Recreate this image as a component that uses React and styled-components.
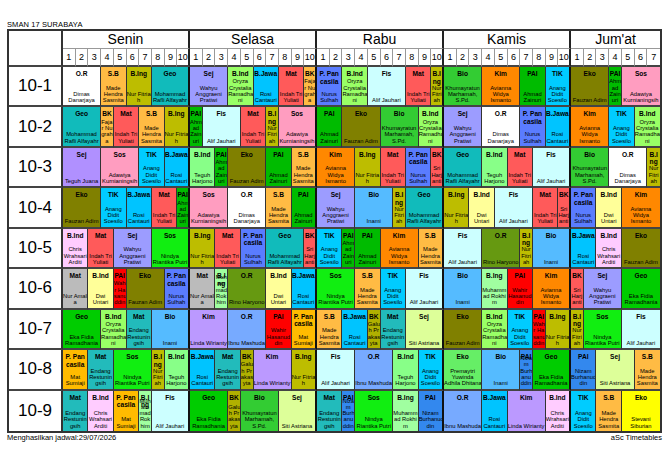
import React from "react";
import styled, { createGlobalStyle } from "styled-components";

const GlobalStyle = createGlobalStyle`
  html, body { margin: 0; padding: 0; background: #fff; }
  body { font-family: "Liberation Sans", Arial, sans-serif; color: #000; }
`;

// teacher: colour + the line breaks the generator used for each cell width
const T = {
  DD: { c: "#ffffff", 3: "Dimas\nDanarjaya" },
  MH: { c: "#ffbb44", 2: "Made\nHendra\nSasmita" },
  NF: { c: "#bdbd00", 1: "Nur\nFitri\nah", 2: "Nur Fitria\nh" },
  MR: { c: "#11bbbb", 3: "Mohammad\nRafli Alfayahr" },
  WA: { c: "#9c9cff", 3: "Wahyu\nAnggraeni\nPratiwi" },
  OC: { c: "#99ff66", 2: "Oryza\nCrystalia\nRamadha\nni" },
  RC: { c: "#00c4ff", 2: "Rosi\nCantauri" },
  IT: { c: "#ff5a5a", 2: "Indah Tri\nYuliati" },
  FN: { c: "#ffbb44", 1: "Faja\nr Nu\ngrah\na" },
  NS: { c: "#5a7cff", 2: "Nurus\nSulhah" },
  AJ: { c: "#ccffff", 3: "Alif Jauhari" },
  KM: { c: "#33cc33", 3: "Khumayratun\nMarhamah,\nS.Pd." },
  AW: { c: "#ff8800", 3: "Avianna\nWidya\nIsmanto" },
  AZ: { c: "#00bb00", 1: "Ahm\nad\nZain\nuri", 2: "Ahmad\nZainuri" },
  AD: { c: "#00ccff", 2: "Anang\nDidit\nSoesilo" },
  FA: { c: "#808000", 3: "Fauzan Adim" },
  AK: { c: "#ff9dc0", 3: "Adawiya\nKurnianingsih" },
  TJ: { c: "#b090ff", 3: "Teguh Juana" },
  TH: { c: "#88ff88", 2: "Teguh\nHarjono" },
  SH: { c: "#ff5a5a", 1: "Sri\nHarj\nanti" },
  IN: { c: "#55bbff", 3: "Inami" },
  DU: { c: "#ffff99", 2: "Dwi\nUntari" },
  CW: { c: "#ffccff", 2: "Chris\nWrahsari\nArditi" },
  NR: { c: "#11ee11", 3: "Nindya\nRiantika Putri" },
  NA: { c: "#bbbbbb", 2: "Nur Amali\na" },
  WH: { c: "#ff0000", 1: "Wahi\nr Ha\nsanu\nddin", 2: "Wahir\nHasanud\ndin" },
  RK: { c: "#a0ffa0", 1: "Muh\nam\nmad\nRok\nhim", 2: "Muhamm\nad Rokhi\nm" },
  RH: { c: "#669911", 3: "Rino Haryono" },
  EF: { c: "#00cc00", 3: "Eka Fidia\nRamadhania" },
  ER: { c: "#22bbbb", 2: "Endang\nRestunin\ngsih" },
  LW: { c: "#bb99ff", 3: "Linda Wirianty" },
  IM: { c: "#77aaff", 3: "Ibnu Mashuda" },
  MS: { c: "#ffbb00", 2: "Mat\nSumiaji" },
  GP: { c: "#b0b000", 1: "Galu\nh Pr\nakasi\nyta" },
  SA: { c: "#ddff99", 3: "Siti Astriana" },
  PY: { c: "#66ee66", 3: "Premaytri\nYuwinda\nAdhila Dhitana" },
  NB: { c: "#3388ee", 1: "Niza\nm\nBurh\nanu\nddin", 2: "Nizam\nBurhanud\ndin" },
  SS: { c: "#ffff00", 3: "Stevani\nSiburian" },
};

const days = [
  { name: "Senin", n: 10 },
  { name: "Selasa", n: 10 },
  { name: "Rabu", n: 10 },
  { name: "Kamis", n: 10 },
  { name: "Jum'at", n: 7 },
];

const PP = "P. Pancasila";

const schedule = [
  ["10-1", [
    ["O.R", "DD", 3], ["S.B", "MH", 2], ["B.Ing", "NF", 2], ["Geo", "MR", 3],
    ["Sej", "WA", 3], ["B.Ind", "OC", 2], ["B.Jawa", "RC", 2], ["Mat", "IT", 2], ["BK", "FN", 1],
    [PP, "NS", 2], ["B.Ind", "OC", 2], ["Fis", "AJ", 3], ["Mat", "IT", 2], ["B.Ing", "NF", 1],
    ["Bio", "KM", 3], ["Kim", "AW", 3], ["PAI", "AZ", 2], ["TIK", "AD", 2],
    ["Eko", "FA", 3], ["PAI", "AZ", 1], ["Sos", "AK", 3],
  ]],
  ["10-2", [
    ["Geo", "MR", 3], ["BK", "FN", 1], ["Mat", "IT", 2], ["S.B", "MH", 2], ["B.Ing", "NF", 2],
    ["PAI", "AZ", 1], ["Fis", "AJ", 3], ["Mat", "IT", 2], ["B.Ing", "NF", 1], ["Sos", "AK", 3],
    ["PAI", "AZ", 2], ["Eko", "FA", 3], ["Bio", "KM", 3], ["B.Ind", "OC", 2],
    ["Sej", "WA", 3], ["O.R", "DD", 3], [PP, "NS", 2], ["B.Jawa", "RC", 2],
    ["Kim", "AW", 3], ["TIK", "AD", 2], ["B.Ind", "OC", 2],
  ]],
  ["10-3", [
    ["Sej", "TJ", 3], ["Sos", "AK", 3], ["TIK", "AD", 2], ["B.Jawa", "RC", 2],
    ["B.Ind", "TH", 2], ["PAI", "AZ", 1], ["Eko", "FA", 3], ["PAI", "AZ", 2], ["S.B", "MH", 2],
    ["Kim", "AW", 3], ["B.Ing", "NF", 2], ["Mat", "IT", 2], [PP, "NS", 2], ["BK", "SH", 1],
    ["Geo", "MR", 3], ["B.Ind", "TH", 2], ["Mat", "IT", 2], ["Fis", "AJ", 3],
    ["Bio", "KM", 3], ["O.R", "DD", 3], ["B.Ing", "NF", 1],
  ]],
  ["10-4", [
    ["Eko", "FA", 3], ["TIK", "AD", 2], ["B.Jawa", "RC", 2], ["Mat", "IT", 2], ["PAI", "AZ", 1],
    ["Sos", "AK", 3], ["O.R", "DD", 3], ["S.B", "MH", 2], ["PAI", "AZ", 2],
    ["Sej", "WA", 3], ["Bio", "IN", 3], ["B.Ing", "NF", 1], ["Geo", "MR", 3],
    ["B.Ing", "NF", 2], ["B.Ind", "DU", 2], ["Fis", "AJ", 3], ["Mat", "IT", 2], ["BK", "SH", 1],
    [PP, "NS", 2], ["B.Ind", "DU", 2], ["Kim", "AW", 3],
  ]],
  ["10-5", [
    ["B.Ind", "CW", 2], ["Mat", "IT", 2], ["Sej", "WA", 3], ["Sos", "NR", 3],
    ["B.Ing", "NF", 2], ["Mat", "IT", 2], [PP, "NS", 2], ["Geo", "MR", 3], ["BK", "SH", 1],
    ["TIK", "AD", 2], ["PAI", "AZ", 1], ["PAI", "AZ", 2], ["Kim", "AW", 3], ["S.B", "MH", 2],
    ["Fis", "AJ", 3], ["O.R", "RH", 3], ["B.Ing", "NF", 1], ["Bio", "IN", 3],
    ["B.Jawa", "RC", 2], ["B.Ind", "CW", 2], ["Eko", "FA", 3],
  ]],
  ["10-6", [
    ["Mat", "NA", 2], ["B.Ind", "DU", 2], ["PAI", "WH", 1], ["Eko", "FA", 3], [PP, "NS", 2],
    ["Mat", "NA", 2], ["B.Ing", "RK", 1], ["O.R", "RH", 3], ["B.Ind", "DU", 2], ["B.Jawa", "RC", 2],
    ["Sos", "NR", 3], ["S.B", "MH", 2], ["TIK", "AD", 2], ["Fis", "AJ", 3],
    ["Bio", "IN", 3], ["B.Ing", "RK", 2], ["PAI", "WH", 2], ["Kim", "AW", 3],
    ["BK", "SH", 1], ["Sej", "WA", 3], ["Geo", "EF", 3],
  ]],
  ["10-7", [
    ["Geo", "EF", 3], ["B.Ind", "OC", 2], ["Mat", "ER", 2], ["Bio", "IN", 3],
    ["Kim", "LW", 3], ["O.R", "IM", 3], ["PAI", "WH", 2], [PP, "MS", 2],
    ["S.B", "MH", 2], ["B.Jawa", "RC", 2], ["BK", "GP", 1], ["Mat", "ER", 2], ["Sej", "SA", 3],
    ["Eko", "FA", 3], ["B.Ind", "OC", 2], ["TIK", "AD", 2], ["PAI", "WH", 1], ["B.Ing", "NF", 2],
    ["B.Ing", "NF", 1], ["Sos", "NR", 3], ["Fis", "AJ", 3],
  ]],
  ["10-8", [
    [PP, "MS", 2], ["Mat", "ER", 2], ["Sos", "NR", 3], ["B.Ing", "NF", 1], ["B.Ind", "TH", 2],
    ["B.Jawa", "RC", 2], ["Mat", "ER", 2], ["BK", "GP", 1], ["Kim", "LW", 3], ["B.Ing", "NF", 2],
    ["Fis", "AJ", 3], ["O.R", "IM", 3], ["B.Ind", "TH", 2], ["TIK", "AD", 2],
    ["Eko", "PY", 3], ["Bio", "IN", 3], ["PAI", "NB", 1], ["Geo", "EF", 3],
    ["PAI", "NB", 2], ["Sej", "SA", 3], ["S.B", "MH", 2],
  ]],
  ["10-9", [
    ["Mat", "ER", 2], ["B.Ind", "CW", 2], [PP, "MS", 2], ["B.Ing", "RK", 1], ["Fis", "AJ", 3],
    ["Geo", "EF", 3], ["BK", "GP", 1], ["Bio", "KM", 3], ["Sej", "SA", 3],
    ["Mat", "ER", 2], ["PAI", "NB", 1], ["Sos", "NR", 3], ["B.Ing", "RK", 2], ["PAI", "NB", 2],
    ["O.R", "IM", 3], ["B.Jawa", "RC", 2], ["Kim", "LW", 3], ["B.Ind", "CW", 2],
    ["TIK", "AD", 2], ["S.B", "MH", 2], ["Eko", "SS", 3],
  ]],
];

const dayEnds = [10, 20, 30, 40];

// subject label as the generator wraps it
const subjectText = (subj, span) => {
  if (subj === PP) return "P. Pan\ncasila";
  if (subj === "B.Ing" && span === 1) return "B.I\nng";
  return subj;
};

const Page = styled.div`
  width: 655px;
  padding: 20px 0 0 7px;
`;

const Title = styled.div`
  height: 9px;
  font-size: 7.5px;
  line-height: 9px;
  letter-spacing: 0.1px;
`;

const Table = styled.div`
  box-sizing: border-box;
  width: 655px;
  height: 404px;
  border: 2px solid #333;
  display: grid;
  grid-template-columns: 54px repeat(47, minmax(0, 1fr));
  grid-template-rows: 18px 18px repeat(9, minmax(0, 1fr));
  background: #fff;
`;

const Corner = styled.div`
  grid-row: span 2;
  border-right: 2px solid #333;
  border-bottom: 2px solid #444;
`;

const DayHead = styled.div`
  grid-column: span ${(p) => p.$span};
  border-right: ${(p) => (p.$last ? "none" : "2px solid #222")};
  border-bottom: 1px solid #999;
  font-size: 14px;
  line-height: 17px;
  text-align: center;
`;

const PeriodNum = styled.div`
  border-right: ${(p) => (p.$dayEnd ? "2px solid #222" : p.$last ? "none" : "1px solid #999")};
  border-bottom: 2px solid #444;
  font-size: 9px;
  line-height: 16px;
  text-align: center;
`;

const ClassLabel = styled.div`
  border-right: 2px solid #333;
  border-bottom: ${(p) => (p.$last ? "none" : "2px solid #444")};
  display: flex;
  align-items: center;
  justify-content: center;
  font-size: 17px;
`;

const Lesson = styled.div`
  grid-column: span ${(p) => p.$span};
  display: grid;
  grid-template-rows: minmax(0, 1fr);
  grid-template-columns: minmax(0, 1fr);
  background: ${(p) => p.$bg};
  border-right: ${(p) => (p.$dayEnd ? "2px solid #111" : p.$last ? "none" : "1px solid #333")};
  border-bottom: ${(p) => (p.$lastRow ? "none" : "2px solid #444")};
  overflow: hidden;
`;

const Subject = styled.div`
  grid-area: 1 / 1;
  align-self: start;
  padding-top: 3px;
  font-size: 6.6px;
  font-weight: bold;
  line-height: 7.5px;
  text-align: center;
  white-space: pre;
`;

const Teacher = styled.div`
  grid-area: 1 / 1;
  align-self: end;
  padding-bottom: 2px;
  font-size: 5.8px;
  line-height: 6.3px;
  text-align: center;
  white-space: pre;
`;

const Footer = styled.div`
  display: flex;
  justify-content: space-between;
  font-size: 7.5px;
  line-height: 9px;
`;

function ClassRow({ label, lessons, lastRow }) {
  let pos = 0;
  return (
    <>
      <ClassLabel $last={lastRow}>{label}</ClassLabel>
      {lessons.map(([subj, tk, span], i) => {
        pos += span;
        const t = T[tk];
        return (
          <Lesson
            key={i}
            $span={span}
            $bg={t.c}
            $dayEnd={dayEnds.includes(pos)}
            $last={pos === 47}
            $lastRow={lastRow}
          >
            <Subject>{subjectText(subj, span)}</Subject>
            <Teacher>{t[span]}</Teacher>
          </Lesson>
        );
      })}
    </>
  );
}

export default function App() {
  const nums = [];
  days.forEach((d, di) => {
    for (let i = 1; i <= d.n; i++) {
      nums.push({ key: `${di}-${i}`, n: i, dayEnd: i === d.n && di < 4, last: di === 4 && i === d.n });
    }
  });

  return (
    <Page>
      <GlobalStyle />
      <Title>SMAN 17 SURABAYA</Title>
      <Table>
        <Corner />
        {days.map((d, i) => (
          <DayHead key={d.name} $span={d.n} $last={i === days.length - 1}>
            {d.name}
          </DayHead>
        ))}
        {nums.map((p) => (
          <PeriodNum key={p.key} $dayEnd={p.dayEnd} $last={p.last}>
            {p.n}
          </PeriodNum>
        ))}
        {schedule.map(([label, lessons], i) => (
          <ClassRow key={label} label={label} lessons={lessons} lastRow={i === schedule.length - 1} />
        ))}
      </Table>
      <Footer>
        <span>Menghasilkan jadwal:29/07/2026</span>
        <span>aSc Timetables</span>
      </Footer>
    </Page>
  );
}
